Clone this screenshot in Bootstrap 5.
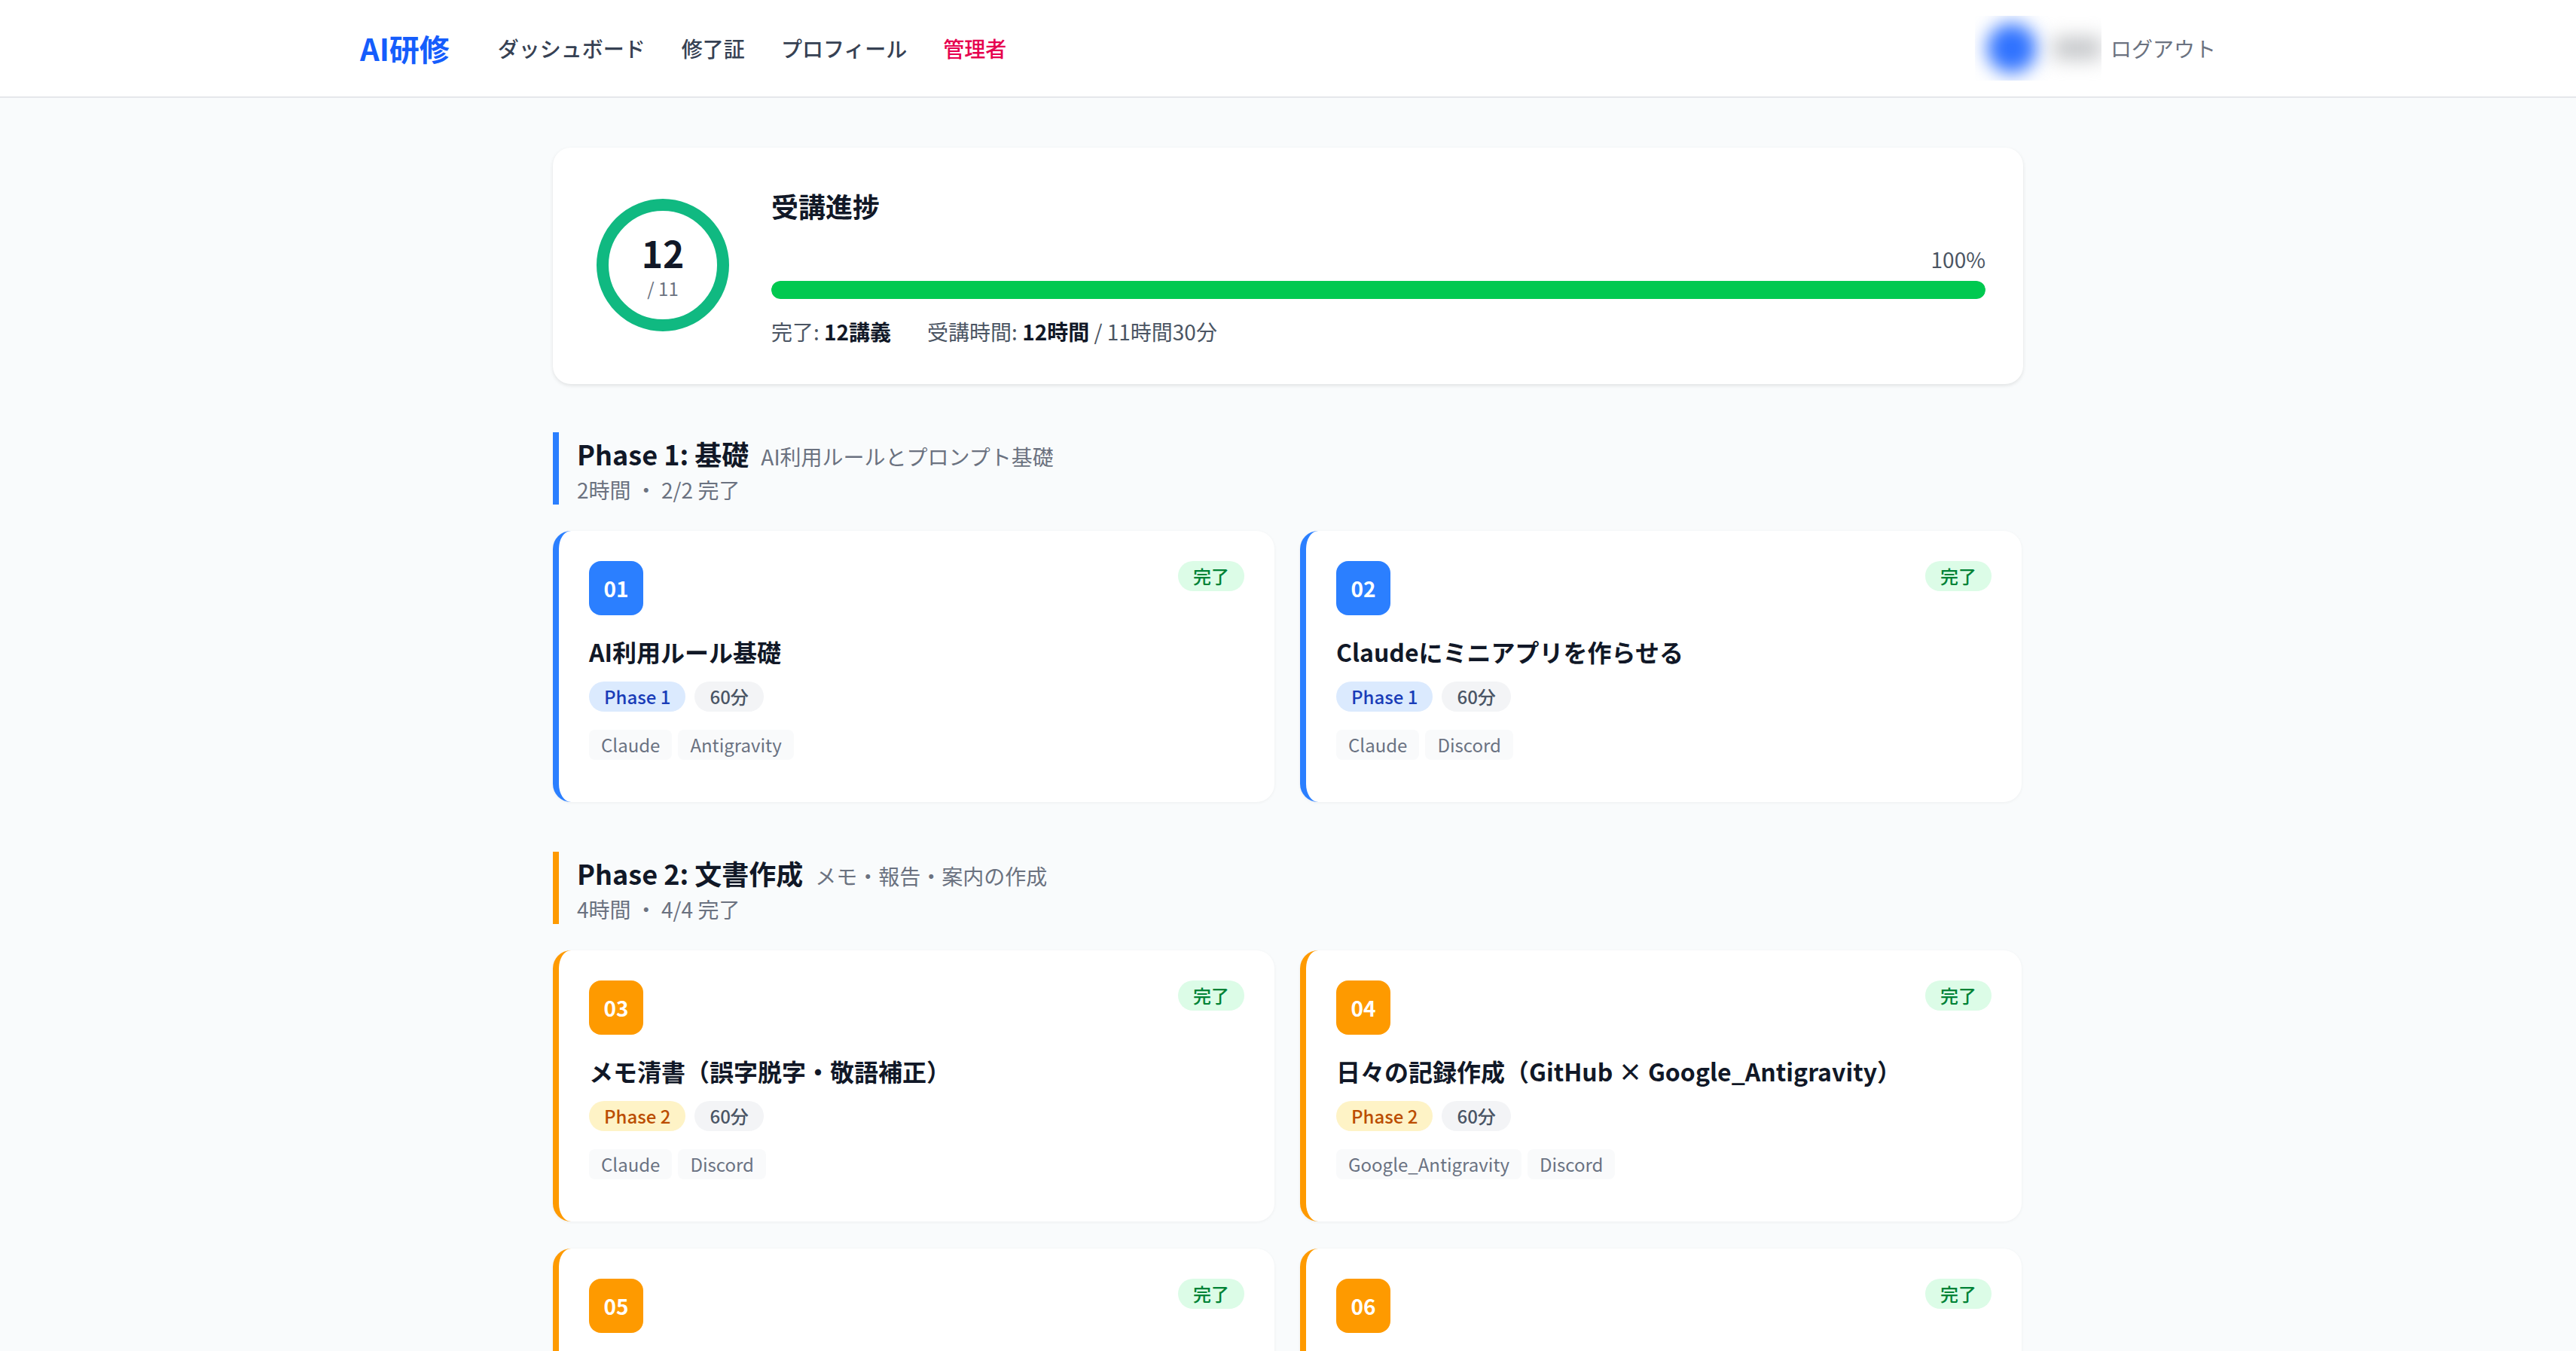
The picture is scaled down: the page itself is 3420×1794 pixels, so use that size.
<!DOCTYPE html>
<html lang="ja">
<head>
  <meta charset="UTF-8">
  <meta name="viewport" content="width=device-width, initial-scale=1.0">
  <title>AI研修</title>
  <link href="https://cdn.jsdelivr.net/npm/bootstrap@5.3.1/dist/css/bootstrap.min.css" rel="stylesheet">
  <style>
    html, body { height: 100%; overflow: hidden; }
    body { background: #f9fbfc; color: #111827; font-family: "Noto Sans CJK JP", "Noto Sans", sans-serif; font-size: 28px; line-height: 40px; }

    .top-nav { height: 130px; background: #fff; border-bottom: 2px solid #e5e7eb; padding: 0; }
    .top-inner { width: 2560px; margin: 0 auto; padding: 0 48px; }
    .top-nav .navbar-brand { font-size: 40px; line-height: 56px; font-weight: 700; color: #155dfc; padding: 0; margin: 0 64px 0 0; }
    .top-nav .nav-link { font-size: 28px; line-height: 40px; font-weight: 500; color: #364153; padding: 0; margin-right: 48px; }
    .top-nav .nav-link.admin-link { color: #e6004f; }
    .user-blur { width: 168px; height: 86px; overflow: hidden; gap: 22px; padding-left: 16px; }
    .user-avatar { width: 66px; height: 66px; flex: none; border-radius: 50%; background: #2f72ff; filter: blur(12px); }
    .user-name { width: 64px; height: 30px; flex: none; background: #c4c6c9; filter: blur(13px); }
    .logout-link { color: #6b7280; font-size: 28px; text-decoration: none; margin-left: 12px; }

    .page-wrap { width: 1952px; margin: 0 auto; padding-top: 66px; }

    .progress-panel { background: #fff; border: 0; border-radius: 24px; box-shadow: 0 2px 5px rgba(0, 0, 0, .1); padding: 50px; gap: 48px; height: 314px; margin-bottom: 64px; }
    .ring-box { width: 192px; height: 192px; flex: none; margin-top: 10px; }
    .ring { width: 176px; height: 176px; border: 16px solid #10b981; border-radius: 50%; padding-top: 4px; }
    .ring-num { font-size: 48px; line-height: 52px; font-weight: 700; }
    .ring-total { font-size: 24px; line-height: 32px; margin-top: 6px; color: #6b7280; }
    .panel-title { font-size: 36px; line-height: 56px; font-weight: 700; margin: -1px 0 23px; }
    .pct-label { color: #4b5563; text-align: right; margin-bottom: 9px; }
    .bar-track { height: 24px; background: #e5e7eb; border-radius: 12px; margin-bottom: 23px; }
    .bar-track .progress-bar { background: #00c950; border-radius: 12px; }
    .panel-stats { color: #4b5563; gap: 48px; }
    .panel-stats strong { color: #111827; font-weight: 700; }

    .phase-head { border-left: 8px solid; padding-left: 24px; height: 96px; margin-bottom: 35px; }
    .phase-name { font-size: 36px; line-height: 56px; font-weight: 700; margin: 0 16px 0 0; }
    .phase-desc { color: #6b7280; font-size: 28px; }
    .phase-meta { color: #6b7280; line-height: 40px; }

    .lesson-row { --bs-gutter-x: 34px; --bs-gutter-y: 36px; margin-right: -15px; margin-bottom: 66px; }
    .lesson-card { background: #fff; border: 0; border-left: 8px solid; border-radius: 24px; box-shadow: 0 1px 4px rgba(0, 0, 0, .05); padding: 40px; height: 360px; }
    .tone-blue { border-color: #2b7fff; }
    .tone-orange { border-color: #fe9a00; }
    .lesson-no { width: 72px; height: 72px; border-radius: 16px; color: #fff; font-size: 28px; line-height: 72px; font-weight: 700; text-align: center; }
    .lesson-no.tone-blue { background: #2b7fff; }
    .lesson-no.tone-orange { background: #fe9a00; }
    .done-pill { background: #dcfce7; color: #008236; font-size: 24px; line-height: 32px; font-weight: 500; border-radius: 20px; padding: 4px 20px; }
    .lesson-title { font-size: 32px; line-height: 48px; font-weight: 600; margin: 24px 0 16px; }
    .pill-row { gap: 12px; margin-bottom: 24px; }
    .info-pill { font-size: 24px; line-height: 32px; font-weight: 500; border-radius: 20px; padding: 4px 20px; }
    .pill-blue { background: #dbeafe; color: #193cb8; }
    .pill-orange { background: #fef3c6; color: #bb4d00; }
    .pill-gray { background: #f3f4f6; color: #4a5565; }
    .tool-tag { background: #f9fafb; color: #6a7282; font-size: 24px; line-height: 32px; border-radius: 8px; padding: 4px 16px; }
  </style>
</head>
<body>

  <nav class="navbar top-nav">
    <div class="top-inner d-flex align-items-center">
      <a class="navbar-brand" href="#">AI研修</a>
      <div class="d-flex">
        <a class="nav-link" href="#">ダッシュボード</a>
        <a class="nav-link" href="#">修了証</a>
        <a class="nav-link" href="#">プロフィール</a>
        <a class="nav-link admin-link" href="#">管理者</a>
      </div>
      <div class="d-flex align-items-center ms-auto">
        <div class="user-blur d-flex align-items-center">
          <div class="user-avatar"></div>
          <div class="user-name"></div>
        </div>
        <a class="logout-link" href="#">ログアウト</a>
      </div>
    </div>
  </nav>

  <main class="page-wrap">

    <section class="card flex-row progress-panel">
      <div class="ring-box d-flex align-items-center justify-content-center">
        <div class="ring d-flex flex-column align-items-center justify-content-center">
          <div class="ring-num">12</div>
          <div class="ring-total">/ 11</div>
        </div>
      </div>
      <div class="flex-grow-1">
        <h2 class="panel-title">受講進捗</h2>
        <div class="pct-label">100%</div>
        <div class="progress bar-track">
          <div class="progress-bar" style="width: 100%"></div>
        </div>
        <div class="panel-stats d-flex">
          <span>完了: <strong>12講義</strong></span>
          <span>受講時間: <strong>12時間</strong> / 11時間30分</span>
        </div>
      </div>
    </section>

    <section>
      <div class="phase-head tone-blue">
        <div class="d-flex align-items-baseline">
          <h3 class="phase-name">Phase 1: 基礎</h3>
          <span class="phase-desc">AI利用ルールとプロンプト基礎</span>
        </div>
        <div class="phase-meta">2時間 ・ 2/2 完了</div>
      </div>
      <div class="row lesson-row" id="phase1"></div>
    </section>

    <section>
      <div class="phase-head tone-orange">
        <div class="d-flex align-items-baseline">
          <h3 class="phase-name">Phase 2: 文書作成</h3>
          <span class="phase-desc">メモ・報告・案内の作成</span>
        </div>
        <div class="phase-meta">4時間 ・ 4/4 完了</div>
      </div>
      <div class="row lesson-row" id="phase2"></div>
    </section>

  </main>

  <script src="https://cdn.jsdelivr.net/npm/bootstrap@5.3.1/dist/js/bootstrap.bundle.min.js"></script>
  <script>
    const lessons = [
      { no: "01", title: "AI利用ルール基礎", phase: 1, tools: ["Claude", "Antigravity"] },
      { no: "02", title: "Claudeにミニアプリを作らせる", phase: 1, tools: ["Claude", "Discord"] },
      { no: "03", title: "メモ清書（誤字脱字・敬語補正）", phase: 2, tools: ["Claude", "Discord"] },
      { no: "04", title: "日々の記録作成（GitHub × Google_Antigravity）", phase: 2, tools: ["Google_Antigravity", "Discord"] },
      { no: "05", phase: 2 },
      { no: "06", phase: 2 },
    ];

    lessons.forEach(lesson => {
      const tone = lesson.phase === 1 ? "blue" : "orange";
      const col = document.createElement("div");
      col.className = "col-6";
      let body = "";
      if (lesson.title) {
        body = `
          <div class="lesson-title">${lesson.title}</div>
          <div class="d-flex pill-row">
            <span class="info-pill pill-${tone}">Phase ${lesson.phase}</span>
            <span class="info-pill pill-gray">60分</span>
          </div>
          <div class="d-flex gap-2">
            ${lesson.tools.map(tool => `<span class="tool-tag">${tool}</span>`).join("")}
          </div>`;
      }
      col.innerHTML = `
        <div class="lesson-card tone-${tone}">
          <div class="d-flex justify-content-between align-items-start">
            <div class="lesson-no tone-${tone}">${lesson.no}</div>
            <span class="done-pill">完了</span>
          </div>${body}
        </div>`;
      document.getElementById("phase" + lesson.phase).appendChild(col);
    });
  </script>
</body>
</html>
